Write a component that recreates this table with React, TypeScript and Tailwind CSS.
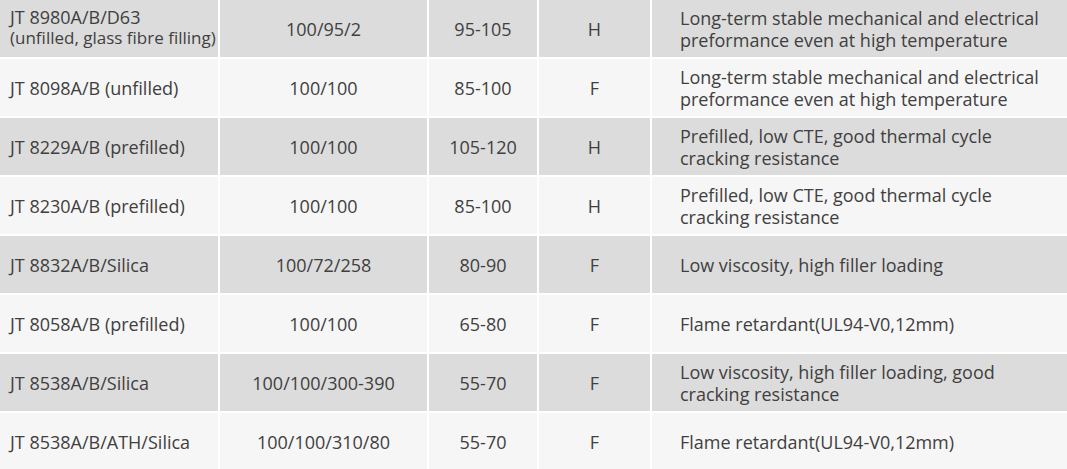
const rows = [
  {
    name: "JT 8980A/B/D63",
    sub: "(unfilled, glass fibre filling)",
    ratio: "100/95/2",
    temp: "95-105",
    cls: "H",
    desc: ["Long-term stable mechanical and electrical", "preformance even at high temperature"],
  },
  {
    name: "JT 8098A/B (unfilled)",
    ratio: "100/100",
    temp: "85-100",
    cls: "F",
    desc: ["Long-term stable mechanical and electrical", "preformance even at high temperature"],
  },
  {
    name: "JT 8229A/B (prefilled)",
    ratio: "100/100",
    temp: "105-120",
    cls: "H",
    desc: ["Prefilled, low CTE, good thermal cycle", "cracking resistance"],
  },
  {
    name: "JT 8230A/B (prefilled)",
    ratio: "100/100",
    temp: "85-100",
    cls: "H",
    desc: ["Prefilled, low CTE, good thermal cycle", "cracking resistance"],
  },
  {
    name: "JT 8832A/B/Silica",
    ratio: "100/72/258",
    temp: "80-90",
    cls: "F",
    desc: ["Low viscosity, high filler loading"],
  },
  {
    name: "JT 8058A/B (prefilled)",
    ratio: "100/100",
    temp: "65-80",
    cls: "F",
    desc: ["Flame retardant(UL94-V0,12mm)"],
  },
  {
    name: "JT 8538A/B/Silica",
    ratio: "100/100/300-390",
    temp: "55-70",
    cls: "F",
    desc: ["Low viscosity, high filler loading, good", "cracking resistance"],
  },
  {
    name: "JT 8538A/B/ATH/Silica",
    ratio: "100/100/310/80",
    temp: "55-70",
    cls: "F",
    desc: ["Flame retardant(UL94-V0,12mm)"],
  },
];

export default function App() {
  return (
    <div
      className="w-[1067px] h-[469px] bg-white overflow-hidden text-[#404040] text-[18px] leading-[22px]"
      style={{ fontFamily: '"Open Sans", "Noto Sans", sans-serif' }}
    >
      <div className="grid grid-cols-[218px_207px_108px_111px_1fr] gap-[2px]">
        {rows.map((r, i) => {
          const bg = i % 2 === 0 ? "bg-[#dcdcdc]" : "bg-[#f6f6f6]";
          const cell = `${bg} h-[57px] flex items-center`;
          return (
            <div key={i} className="contents">
              <div className={`${cell} pl-[10px] whitespace-nowrap`}>
                {r.sub ? (
                  <div className="-mt-[3px]">
                    <div className="leading-[20px]">{r.name}</div>
                    <div className="text-[17px] leading-[21px]">{r.sub}</div>
                  </div>
                ) : (
                  <span>{r.name}</span>
                )}
              </div>
              <div className={`${cell} justify-center`}>{r.ratio}</div>
              <div className={`${cell} justify-center`}>{r.temp}</div>
              <div className={`${cell} justify-center`}>{r.cls}</div>
              <div className={`${cell} pl-[28px] whitespace-nowrap`}>
                <div>
                  {r.desc.map((d) => (
                    <div key={d}>{d}</div>
                  ))}
                </div>
              </div>
            </div>
          );
        })}
      </div>
    </div>
  );
}
